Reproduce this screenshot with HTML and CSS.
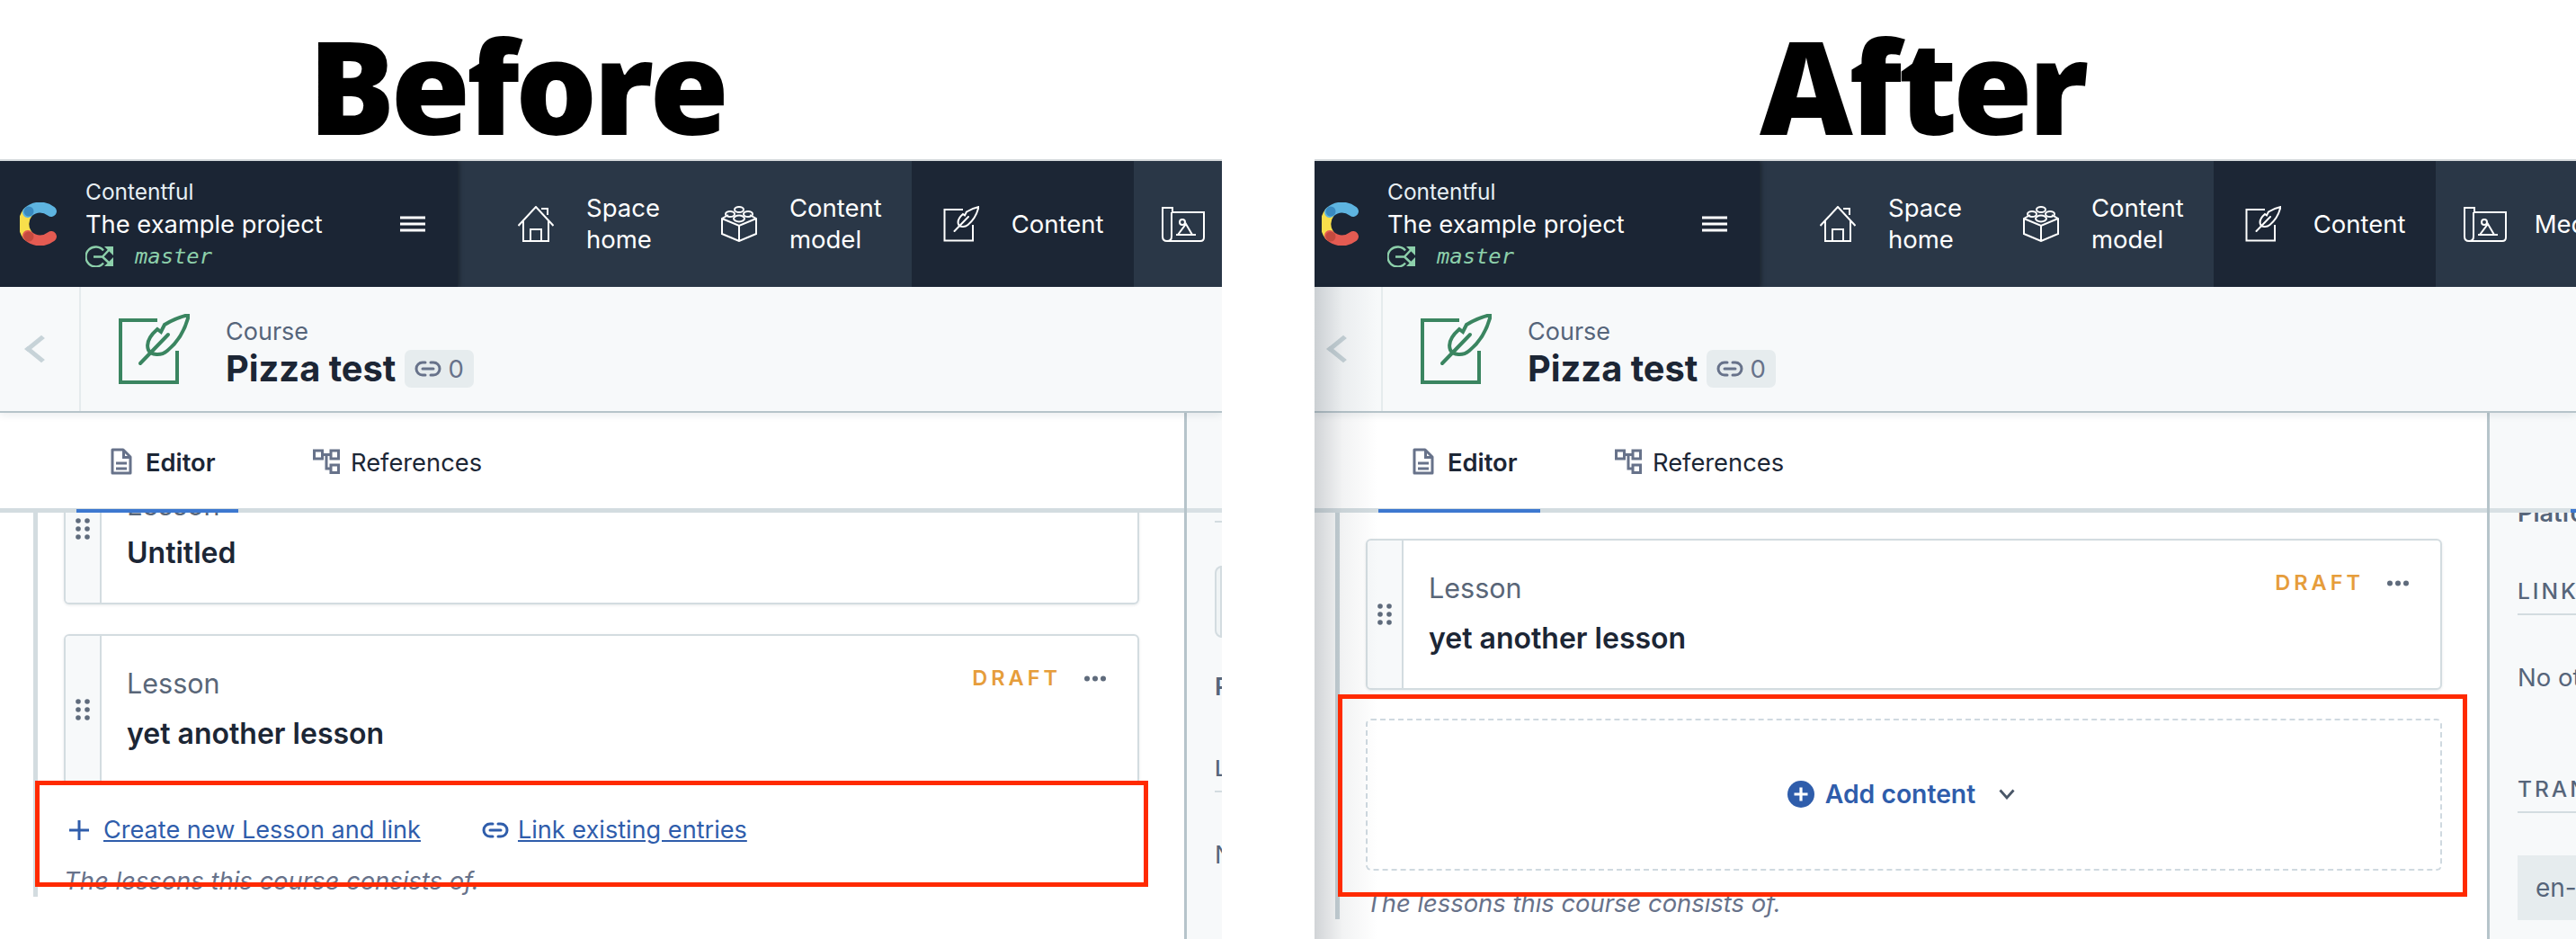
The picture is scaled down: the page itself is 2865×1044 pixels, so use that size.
FILE: index.html
```html
<!DOCTYPE html>
<html lang="en">
<head>
<meta charset="utf-8">
<title>Before and after</title>
<link rel="stylesheet" href="styles.css">
</head>
<body>
<svg class="defs" aria-hidden="true">
  <symbol id="i-logo" viewBox="0 0 42 48">
    <g fill="none" stroke-width="12" stroke-linecap="round">
      <path stroke="#f8df4b" d="M9 11C3 19 3 29 9 37"/>
      <path stroke="#5eb4e0" d="M9 11C17 4 27 4 35 10"/>
      <path stroke="#e45b52" d="M9 37C17 44 27 44 35 38"/>
    </g>
    <circle cx="10" cy="10" r="5.5" fill="#3a8ac0"/>
    <circle cx="10" cy="38" r="5.5" fill="#c44a3f"/>
  </symbol>
  <symbol id="i-menu" viewBox="0 0 28 18"><path fill="none" stroke="currentColor" stroke-width="3" d="M0 2H28M0 9H28M0 16H28"/></symbol>
  <symbol id="i-env" viewBox="0 0 32 24">
    <g fill="none" stroke="currentColor" stroke-width="2.4">
      <path d="M20 5.5A11 11 0 1 0 20 19.5"/>
      <path d="M9 12.5H19L27 4M19 12.5L27 20"/>
    </g>
    <path fill="currentColor" d="M21 1H31V11ZM21 23H31V13Z"/>
  </symbol>
  <symbol id="i-home" viewBox="0 0 40 40">
    <g fill="none" stroke="currentColor" stroke-width="2">
      <path d="M0.5 22L20 1L39.5 22"/>
      <path d="M6 16V39H34V16"/>
      <path d="M14 39V26H26V39"/>
      <path d="M26 3H33V10"/>
    </g>
  </symbol>
  <symbol id="i-model" viewBox="0 0 40 40">
    <g fill="none" stroke="currentColor" stroke-width="2">
      <path d="M8 10L1 14V31L20 39L39 31V14L32 10"/>
      <path d="M1 14L20 22L39 14"/>
      <path d="M20 22V39"/>
      <ellipse cx="20" cy="4" rx="5" ry="3"/>
      <ellipse cx="10" cy="9" rx="5" ry="3"/>
      <ellipse cx="30" cy="9" rx="5" ry="3"/>
      <ellipse cx="20" cy="14" rx="6" ry="3.5"/>
    </g>
  </symbol>
  <symbol id="i-feather" viewBox="0 0 80 78">
    <g fill="none" stroke="currentColor" stroke-width="4">
      <path d="M44 7H3V76H66V41"/>
      <path d="M79 1C70 3 60 7 52 12L48 20L44 17C36 24 31 32 34 40C37 46 48 47 55 41C66 32 75 18 79 1Z"/>
      <path d="M25 55L56 23" stroke-linecap="round"/>
    </g>
  </symbol>
  <symbol id="i-media" viewBox="0 0 48 40">
    <g fill="none" stroke="currentColor" stroke-width="2">
      <path d="M1 2H12V7H47V35Q47 39 43 39H6Q1 39 1 34Z"/>
      <path d="M11 7V34Q11 39 6 39"/>
      <circle cx="23" cy="18" r="3"/>
      <path d="M18 32L27 20L34 32Z"/>
      <path d="M16 32H38"/>
    </g>
  </symbol>
  <symbol id="i-link" viewBox="0 0 30 20">
    <path fill="none" stroke="currentColor" stroke-width="3" stroke-linecap="round" d="M12 3H9A7 7 0 0 0 9 17H12M18 3H21A7 7 0 0 1 21 17H18M9 10H21"/>
  </symbol>
  <symbol id="i-doc" viewBox="0 0 24 30">
    <path fill="none" stroke="currentColor" stroke-width="3" stroke-linejoin="round" d="M2 2H14L22 10V28H2Z"/>
    <path fill="currentColor" d="M13 2H16V9H22V12H13Z"/>
    <path stroke="currentColor" stroke-width="3" d="M6 17H18M6 23H18"/>
  </symbol>
  <symbol id="i-refs" viewBox="0 0 30 28">
    <g fill="none" stroke="currentColor" stroke-width="3">
      <rect x="1.500" y="2" width="9" height="9"/>
      <rect x="20" y="2" width="8.500" height="9"/>
      <rect x="20" y="18" width="8.500" height="8.500"/>
      <path d="M10 6.500H20M15 6.500V22H20"/>
    </g>
  </symbol>
  <symbol id="i-drag" viewBox="0 0 16 24">
    <g fill="currentColor">
      <circle cx="3" cy="3" r="2.800"/><circle cx="13" cy="3" r="2.800"/>
      <circle cx="3" cy="12" r="2.800"/><circle cx="13" cy="12" r="2.800"/>
      <circle cx="3" cy="21" r="2.800"/><circle cx="13" cy="21" r="2.800"/>
    </g>
  </symbol>
  <symbol id="i-more" viewBox="0 0 24 7">
    <g fill="currentColor"><circle cx="3" cy="3.500" r="3"/><circle cx="12" cy="3.500" r="3"/><circle cx="21" cy="3.500" r="3"/></g>
  </symbol>
  <symbol id="i-plus" viewBox="0 0 22 22"><path fill="none" stroke="currentColor" stroke-width="3" d="M11 0V22M0 11H22"/></symbol>
  <symbol id="i-add" viewBox="0 0 30 30">
    <circle cx="15" cy="15" r="15" fill="currentColor"/>
    <path fill="none" stroke="#fff" stroke-width="3.200" d="M15 7.500V22.500M7.500 15H22.500"/>
  </symbol>
  <symbol id="i-down" viewBox="0 0 18 12"><path fill="none" stroke="currentColor" stroke-width="2.800" d="M1.500 1.500L9 10L16.500 1.500"/></symbol>
</svg>

<main class="page">
  <section class="column column-before">
    <h1 class="caption">Before</h1>
    <div class="shot">
      <nav class="topnav">
        <div class="brand">
          <svg class="logo"><use href="#i-logo"/></svg>
          <div class="brand-text">
            <span class="org">Contentful</span>
            <span class="project">The example project</span>
            <span class="env"><svg class="env-icon"><use href="#i-env"/></svg><em>master</em></span>
          </div>
          <svg class="menu"><use href="#i-menu"/></svg>
        </div>
        <a class="nav-item nav-first"><svg class="nav-icon"><use href="#i-home"/></svg><span>Space<br>home</span></a>
        <a class="nav-item"><svg class="nav-icon"><use href="#i-model"/></svg><span>Content<br>model</span></a>
        <a class="nav-item nav-active"><svg class="nav-icon"><use href="#i-feather"/></svg><span>Content</span></a>
        <a class="nav-item nav-media"><svg class="nav-icon media-icon"><use href="#i-media"/></svg><span>Media</span></a>
      </nav>
      <header class="entry-head">
        <div class="back"><span class="chevron"></span></div>
        <svg class="entry-icon"><use href="#i-feather"/></svg>
        <div class="entry-title">
          <span class="entry-type">Course</span>
          <span class="entry-name">Pizza test <span class="badge"><svg class="badge-icon"><use href="#i-link"/></svg>0</span></span>
        </div>
      </header>
      <div class="workspace">
        <div class="editor">
          <div class="tabs">
            <a class="tab tab-active"><svg class="tab-doc"><use href="#i-doc"/></svg>Editor</a>
            <a class="tab tab-refs"><svg class="tab-ref"><use href="#i-refs"/></svg>References</a>
          </div>
          <div class="scroll">
            <div class="field">
              <article class="card card-scrolled">
                <div class="handle"><svg class="drag"><use href="#i-drag"/></svg></div>
                <div class="card-body"><span class="card-type">Lesson</span><strong class="card-title">Untitled</strong></div>
              </article>
              <article class="card card-next">
                <div class="handle"><svg class="drag"><use href="#i-drag"/></svg></div>
                <div class="card-body"><span class="card-type">Lesson</span><strong class="card-title">yet another lesson</strong></div>
                <div class="card-status"><span class="draft">DRAFT</span><svg class="more"><use href="#i-more"/></svg></div>
              </article>
              <div class="links">
                <a class="link-action"><svg class="plus"><use href="#i-plus"/></svg><u>Create new Lesson and link</u></a>
                <a class="link-action link-second"><svg class="link-icon"><use href="#i-link"/></svg><u>Link existing entries</u></a>
              </div>
              <p class="help">The lessons this course consists of.</p>
            </div>
          </div>
        </div>
        <aside class="sidebar">
          <div class="side-tabs"></div>
          <div class="side-scroll">
            <div class="side-rule"></div>
            <div class="side-input"></div>
            <div class="side-status">Platform</div>
            <h2 class="side-heading">LINKS</h2>
            <p class="side-text">No other entries link to this entry.</p>
          </div>
        </aside>
      </div>
      <div class="annotation annotation-before"></div>
    </div>
  </section>

  <section class="column column-after">
    <h1 class="caption">After</h1>
    <div class="shot">
      <nav class="topnav">
        <div class="brand">
          <svg class="logo"><use href="#i-logo"/></svg>
          <div class="brand-text">
            <span class="org">Contentful</span>
            <span class="project">The example project</span>
            <span class="env"><svg class="env-icon"><use href="#i-env"/></svg><em>master</em></span>
          </div>
          <svg class="menu"><use href="#i-menu"/></svg>
        </div>
        <a class="nav-item nav-first"><svg class="nav-icon"><use href="#i-home"/></svg><span>Space<br>home</span></a>
        <a class="nav-item"><svg class="nav-icon"><use href="#i-model"/></svg><span>Content<br>model</span></a>
        <a class="nav-item nav-active"><svg class="nav-icon"><use href="#i-feather"/></svg><span>Content</span></a>
        <a class="nav-item nav-media"><svg class="nav-icon media-icon"><use href="#i-media"/></svg><span>Media</span></a>
      </nav>
      <header class="entry-head">
        <div class="back"><span class="chevron"></span></div>
        <svg class="entry-icon"><use href="#i-feather"/></svg>
        <div class="entry-title">
          <span class="entry-type">Course</span>
          <span class="entry-name">Pizza test <span class="badge"><svg class="badge-icon"><use href="#i-link"/></svg>0</span></span>
        </div>
      </header>
      <div class="workspace">
        <div class="editor">
          <div class="tabs">
            <a class="tab tab-active"><svg class="tab-doc"><use href="#i-doc"/></svg>Editor</a>
            <a class="tab tab-refs"><svg class="tab-ref"><use href="#i-refs"/></svg>References</a>
          </div>
          <div class="scroll">
            <div class="field">
              <article class="card">
                <div class="handle"><svg class="drag"><use href="#i-drag"/></svg></div>
                <div class="card-body"><span class="card-type">Lesson</span><strong class="card-title">yet another lesson</strong></div>
                <div class="card-status"><span class="draft">DRAFT</span><svg class="more"><use href="#i-more"/></svg></div>
              </article>
              <div class="add-box">
                <svg class="add-icon"><use href="#i-add"/></svg>
                <span class="add-label">Add content</span>
                <svg class="add-caret"><use href="#i-down"/></svg>
              </div>
              <p class="help">The lessons this course consists of.</p>
            </div>
          </div>
        </div>
        <aside class="sidebar">
          <div class="side-tabs"><span class="side-tab-active"></span></div>
          <div class="side-scroll">
            <div class="side-status side-status-cut">Platform</div>
            <h2 class="side-heading">LINKS</h2>
            <p class="side-text">No other entries link to this entry.</p>
            <h2 class="side-heading side-heading-next">TRANSLATION</h2>
            <div class="locale">en-US</div>
          </div>
        </aside>
      </div>
      <div class="annotation annotation-after"></div>
    </div>
  </section>
</main>
</body>
</html>
```

FILE: styles.css
```css
* { box-sizing: border-box; }
html, body { margin: 0; height: 100%; background: #fff; overflow: hidden; }
body { font-family: Inter, "Liberation Sans", sans-serif; color: #1c2635; }
.defs { position: absolute; width: 0; height: 0; }
a { color: inherit; text-decoration: none; }
svg { display: block; flex: none; }

.page { display: grid; grid-template-columns: 1359px 1403px; column-gap: 103px; width: 2865px; height: 1044px; }
.column { display: flex; flex-direction: column; min-width: 0; }
.column-before { --inset: 14px; --main: 1317px; --caption: 343px; }
.column-after { --inset: 0px; --main: 1304px; --caption: 495px; }

.caption { margin: 0; height: 177px; padding: 12px 0 0 var(--caption); font: 800 143px/165px "Open Sans", sans-serif; letter-spacing: -4.500px; color: #000; white-space: nowrap; }
.shot { position: relative; flex: 1; min-height: 0; display: flex; flex-direction: column; overflow: hidden; border-top: 2px solid #d5d9dc; }

.column-after .shot::after { content: ""; position: absolute; left: 0; top: 140px; bottom: 0; width: 70px; background: linear-gradient(90deg, rgba(90,100,110,.28), rgba(90,100,110,.08) 45%, rgba(90,100,110,0)); pointer-events: none; z-index: 5; }

/* Top navigation */
.topnav { display: flex; height: 140px; flex: none; background: #2a3747; color: #fff; font-size: 27.500px; line-height: 35px; white-space: nowrap; overflow: hidden; }
.brand { display: flex; align-items: center; flex: none; width: calc(495px + var(--inset)); padding-left: calc(8px + var(--inset)); background: #1b2534; box-shadow: 2px 0 5px rgba(0,0,0,.35); }
.logo { width: 42px; height: 48px; margin-right: 31px; }
.brand-text { display: flex; flex-direction: column; padding-bottom: 2px; }
.org { font-size: 24.500px; line-height: 37px; color: #e8f0f5; }
.project { font-size: 27.300px; line-height: 36px; }
.env { display: flex; align-items: center; height: 34px; color: #8dd0ab; }
.env-icon { width: 32px; height: 24px; margin-right: 23px; }
.env em { font: italic 23.800px/34px "DejaVu Sans Mono", monospace; }
.menu { width: 28px; height: 18px; margin-left: auto; margin-right: 36px; }
.nav-item { display: flex; align-items: center; gap: 36px; padding: 0 33px 0 35px; }
.nav-first { margin-left: 32px; }
.nav-active { background: #1c2635; }
.nav-media { gap: 31px; padding-left: 31px; }
.nav-icon { width: 40px; height: 40px; }
.media-icon { width: 48px; }

/* Entry header */
.entry-head { display: flex; align-items: center; height: 140px; flex: none; background: #f7f9fa; border-bottom: 2px solid #b6c4ca; position: relative; z-index: 3; box-shadow: 0 3px 8px rgba(30,50,60,.08); }
.back { align-self: stretch; display: flex; align-items: center; width: calc(76px + var(--inset)); padding-left: calc(20px + var(--inset)); border-right: 2px solid #e5ebed; }
.chevron { width: 24px; height: 24px; border-left: 5px solid #c7d3d8; border-bottom: 5px solid #c7d3d8; transform: rotate(45deg) skew(-6deg, -6deg); }
.entry-icon { width: 80px; height: 78px; margin-left: 41px; margin-right: 40px; color: #3a8560; }
.entry-title { display: flex; flex-direction: column; padding-top: 3px; }
.entry-type { font-size: 27px; line-height: 41px; color: #56657a; }
.entry-name { display: flex; align-items: center; gap: 10px; font-size: 39.800px; font-weight: 700; line-height: 42px; color: #1c2635; white-space: nowrap; }
.badge { display: flex; align-items: center; gap: 7px; height: 42px; padding: 0 11px; border-radius: 7px; background: #e6ecee; color: #67728a; font-size: 27.500px; font-weight: 400; }
.badge-icon { width: 30px; height: 20px; }

/* Workspace */
.workspace { display: flex; flex: 1; min-height: 0; }
.editor { display: flex; flex-direction: column; width: var(--main); flex: none; min-height: 0; }
.tabs { display: flex; align-items: center; height: 111px; flex: none; padding-left: calc(71px + var(--inset)); border-bottom: 5px solid #d3dce0; position: relative; z-index: 2; background: #fff; }
.tab { display: flex; align-items: center; height: 106px; font-size: 27.300px; white-space: nowrap; position: relative; padding: 5px 24px 0 38px; }
.tab-doc, .tab-ref { position: relative; top: -2px; }
.tab-active { font-weight: 600; width: 180px; }
.tab-active::after { content: ""; position: absolute; left: 0; right: 0; bottom: -5px; height: 4px; background: #3d78d0; }
.tab-refs { padding-left: 83px; }
.tab-doc { width: 24px; height: 30px; margin-right: 15px; color: #67728a; }
.tab-ref { width: 30px; height: 28px; margin-right: 12px; color: #67728a; }

.scroll { flex: 1; min-height: 0; overflow: hidden; padding-bottom: 1px; }
.field { margin-left: calc(23px + var(--inset)); border-left: 5.500px solid #d3dce0; padding: 29px 50px 0 29px; }
.column-after .field { border-left-color: #c8d3d8; }

.card { position: relative; display: flex; height: 168px; border: 2px solid #d3dce0; border-radius: 6px; background: #fff; box-shadow: 0 1px 3px rgba(30,50,60,.1); overflow: hidden; }
.card-scrolled { margin-top: -95px; }
.card-scrolled .card-body { padding-top: 36px; }
.card-scrolled .card-title { margin-top: 13px; }
.card-next { margin-top: 33px; }
.handle { display: flex; align-items: center; justify-content: center; width: 40px; flex: none; background: #f7f9fa; border-right: 2px solid #d3dce0; color: #5f6b7c; }
.drag { width: 16px; height: 24px; }
.card-body { display: flex; flex-direction: column; padding: 33px 0 0 28px; }
.card-type { font-size: 30.500px; line-height: 40px; color: #596678; }
.card-title { font-size: 32px; line-height: 40px; font-weight: 600; margin-top: 16px; }
.card-status { position: absolute; right: 35px; top: 35px; display: flex; align-items: center; gap: 26px; }
.draft { font-size: 23.500px; line-height: 24px; font-weight: 600; letter-spacing: 4px; color: #e69d3b; }
.more { width: 24px; height: 7px; color: #5f6b7c; }

.links { position: relative; display: flex; align-items: flex-start; height: 93px; margin: -5px 0 0 -29px; padding: 37px 0 0 35px; background: #fff; color: #2f5dab; font-size: 27.100px; line-height: 36px; white-space: nowrap; }
.link-action { display: flex; align-items: center; }
.plus { width: 22px; height: 22px; margin-right: 16px; }
.link-second { margin-left: 68px; }
.link-icon { width: 30px; height: 20px; margin-right: 10px; }
.help { margin: 0; font-size: 27.400px; line-height: 36px; font-style: italic; color: #67728a; white-space: nowrap; }

.add-box { display: flex; align-items: center; justify-content: center; height: 169px; margin-top: 32px; margin-bottom: 18px; padding: 0 6px 2px 0; border: 2px dashed #cfd9e0; border-radius: 6px; color: #2f5dab; }
.add-icon { width: 30px; height: 30px; margin-right: 12px; }
.add-label { font-size: 28.300px; font-weight: 600; }
.add-caret { width: 18px; height: 12px; margin-left: 26px; color: #4a5768; }

/* Sidebar */
.sidebar { flex: 1; min-width: 0; display: flex; flex-direction: column; background: #f7f9fa; border-left: 3px solid #b6c4ca; overflow: hidden; color: #56657a; white-space: nowrap; position: relative; z-index: 1; }
.side-tabs { position: relative; z-index: 1; height: 111px; flex: none; background: #f7f9fa; border-bottom: 5px solid #d8e0e4; }
.side-tab-active { position: absolute; right: 0; bottom: -5px; width: 6px; height: 4px; background: #3d78d0; }
.side-scroll { padding-left: 31px; }
.side-rule { height: 2px; margin-top: 9px; background: #d3dce0; }
.side-input { height: 80px; margin-top: 48px; border: 2px solid #d3dce0; border-radius: 8px 0 0 8px; background: #f0f4f5; }
.side-status { margin-top: 37px; font-size: 27px; font-weight: 600; line-height: 36px; }
.side-status-cut { margin-top: -17px; margin-bottom: -4px; }
.side-heading { margin: 57px 0 0; padding-bottom: 10px; font-size: 24.500px; font-weight: 500; line-height: 30px; letter-spacing: 3px; border-bottom: 2px solid #d3dce0; }
.side-heading-next { margin-top: 91px; }
.side-text { margin: 51px 0 0; font-size: 27.500px; line-height: 36px; }
.locale { height: 72px; margin-top: 47px; padding-left: 20px; background: #e6ecee; font-size: 28px; line-height: 72px; }

/* Red call-outs */
.annotation { position: absolute; border: 5.500px solid #ff2a00; z-index: 6; pointer-events: none; }
.annotation-before { left: 39px; top: 689px; width: 1238px; height: 118px; }
.annotation-after { left: 26px; top: 593px; width: 1256px; height: 225px; }
```
